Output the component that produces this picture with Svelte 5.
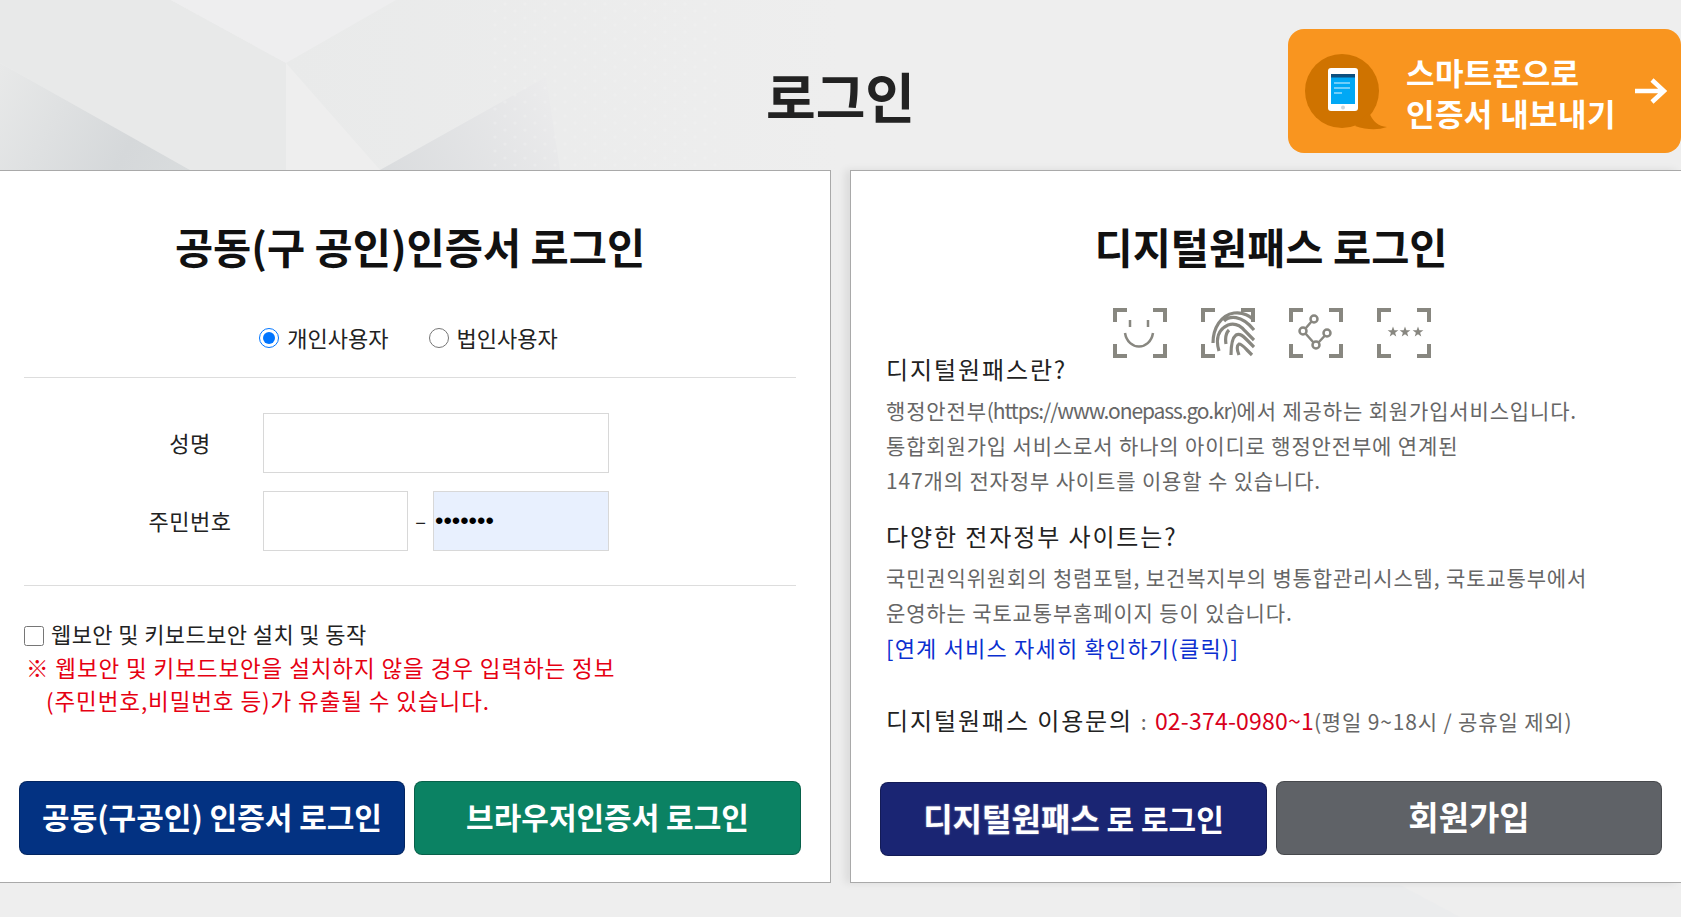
<script>
  const bullets = '•••••••';
  const stars = [16, 28, 41];
</script>

<div class="page">
  <svg class="bg" width="1681" height="917" viewBox="0 0 1681 917" aria-hidden="true">
    <defs>
      <linearGradient id="shadeA" gradientUnits="userSpaceOnUse" x1="0" y1="63" x2="190" y2="170">
        <stop offset="0" stop-color="#e8e9e9" />
        <stop offset="0.7" stop-color="#d5d8da" />
        <stop offset="1" stop-color="#d9dcdd" />
      </linearGradient>
      <linearGradient id="shadeB" gradientUnits="userSpaceOnUse" x1="380" y1="170" x2="546" y2="77">
        <stop offset="0" stop-color="#dadcde" />
        <stop offset="1" stop-color="#ebebec" />
      </linearGradient>
      <linearGradient id="fade" gradientUnits="userSpaceOnUse" x1="286" y1="0" x2="840" y2="0">
        <stop offset="0" stop-color="#e9eaea" />
        <stop offset="1" stop-color="#eeeeee" />
      </linearGradient>
      <pattern id="dots" width="20" height="14" patternUnits="userSpaceOnUse">
        <circle cx="5" cy="4" r="1.6" fill="#f4f4f4" />
        <circle cx="15" cy="11" r="1.6" fill="#f4f4f4" />
      </pattern>
    </defs>
    <polygon points="0,0 171,0 286,63 286,170 190,170 0,63" fill="#e8e9e9" />
    <polygon points="171,0 396,0 286,63" fill="#eeeeef" />
    <polygon points="286,63 396,0 840,0 840,170 380,170" fill="url(#fade)" />
    <polygon points="0,63 190,170 0,170" fill="url(#shadeA)" />
    <polygon points="546,77 380,170 560,170" fill="url(#shadeB)" />
    <polygon points="490,0 720,0 720,170 490,170" fill="url(#dots)" opacity="0.3" />
    <polygon points="1140,885 1400,885 1460,917 1140,917" fill="#ebeced" />
  </svg>

  <header class="top">
    <h1>로그인</h1>
    <a class="export" href="#export">
      <svg class="export-icon" width="84" height="78" viewBox="0 0 84 78" aria-hidden="true">
        <circle cx="37" cy="37" r="37" fill="#cf7300" />
        <path d="M64 58Q69 72 82 73Q68 78 50 72Z" fill="#cf7300" />
        <rect x="23" y="14" width="30" height="43" rx="3" fill="#fff" />
        <rect x="26" y="20" width="24" height="30" fill="#00a8f5" />
        <rect x="26" y="20" width="24" height="3.5" fill="#0d4f7e" />
        <path d="M29 29H45M29 34H45M29 39H37" stroke="#dff4ff" stroke-width="1.2" fill="none" />
        <circle cx="38" cy="53.5" r="2" fill="#cfd6da" />
      </svg>
      <span class="export-text">스마트폰으로<br />인증서 내보내기</span>
      <svg class="export-arrow" width="34" height="28" viewBox="0 0 34 28" aria-hidden="true">
        <path d="M2 14H30M19 3L31 14L19 25" stroke="#fff" stroke-width="4.5" fill="none" />
      </svg>
    </a>
  </header>

  <main class="panels">
    <section class="panel left">
      <h2>공동(구 공인)인증서 로그인</h2>
      <div class="radios">
        <label><input type="radio" name="kind" checked /> 개인사용자</label>
        <label><input type="radio" name="kind" /> 법인사용자</label>
      </div>
      <div class="form">
        <div class="row">
          <span class="row-label">성명</span>
          <input class="field wide" type="text" />
        </div>
        <div class="row">
          <span class="row-label">주민번호</span>
          <input class="field short" type="text" />
          <span class="dash">–</span>
          <input class="field filled" type="text" value={bullets} />
        </div>
      </div>
      <label class="check"><input type="checkbox" /> 웹보안 및 키보드보안 설치 및 동작</label>
      <p class="warn">※ 웹보안 및 키보드보안을 설치하지 않을 경우 입력하는 정보<br /><span class="warn-indent">(주민번호,비밀번호 등)가 유출될 수 있습니다.</span></p>
      <div class="actions">
        <button class="btn navy">공동(구공인) 인증서 로그인</button>
        <button class="btn green">브라우저인증서 로그인</button>
      </div>
    </section>

    <section class="panel right">
      <h2>디지털원패스 로그인</h2>
      <div class="methods">
        <svg width="54" height="50" viewBox="0 0 54 50" aria-hidden="true">
          <path class="corners" d="M2 14V2H14M40 2H52V14M2 36V48H14M40 48H52V36" />
          <path class="thin" d="M17 12V19M35 12V19M12 25C15 43 37 43 40 25" />
        </svg>
        <svg width="54" height="50" viewBox="0 0 54 50" aria-hidden="true">
          <path class="corners" d="M2 14V2H14M40 2H52V14M2 36V48H14" />
          <path class="print" d="M12 35C12 20 20 7 33 5C41 4 48 7 53 12M23 13C28 8 40 6 53 22M18 43C14 30 18 21 27 17C33 15 39 17 44 23L53 32M25 36C24 30 25 25 28 22M30 47C30 38 31 30 35 27C39 25 42 28 46 32L53 39M38 47C36 42 35 38 38 36C41 36 44 40 47 43L51 47" />
        </svg>
        <svg width="54" height="50" viewBox="0 0 54 50" aria-hidden="true">
          <path class="corners" d="M2 14V2H14M40 2H52V14M2 36V48H14M40 48H52V36" />
          <circle class="thin" cx="25" cy="11" r="3.5" />
          <circle class="thin" cx="14" cy="23" r="3.5" />
          <circle class="thin" cx="38" cy="25" r="3.5" />
          <circle class="thin" cx="27" cy="37" r="3.5" />
          <path class="thin" d="M22.5 13.5L16.5 20.5M16.5 25.5L24.5 34.5M29.5 34.5L35.5 28" />
        </svg>
        <svg width="54" height="50" viewBox="0 0 54 50" aria-hidden="true">
          <path class="corners" d="M2 14V2H14M40 2H52V14M2 36V48H14M40 48H52V36" />
          {#each stars as x}
            <path class="dot" transform="translate({x} 24) scale(1.25)" d="M0-4.5L1.1-1.4L4.3-1.4L1.7.5L2.6 3.6L0 1.8L-2.6 3.6L-1.7.5L-4.3-1.4L-1.1-1.4Z" />
          {/each}
        </svg>
      </div>

      <div class="info">
        <h3>디지털원패스란?</h3>
        <p>행정안전부<span class="url">(https://www.onepass.go.kr)</span>에서 제공하는 회원가입서비스입니다.<br />통합회원가입 서비스로서 하나의 아이디로 행정안전부에 연계된<br />147개의 전자정부 사이트를 이용할 수 있습니다.</p>
        <h3 class="second">다양한 전자정부 사이트는?</h3>
        <p>국민권익위원회의 청렴포털, 보건복지부의 병통합관리시스템, 국토교통부에서<br />운영하는 국토교통부홈페이지 등이 있습니다.<br /><a href="#services">[연계 서비스 자세히 확인하기(클릭)]</a></p>
        <p class="contact"><strong>디지털원패스 이용문의</strong> <span class="colon">:</span> <em>02-374-0980~1</em>(평일 9~18시 / 공휴일 제외)</p>
      </div>

      <div class="actions">
        <button class="btn indigo"><span class="soft">디지털원패스</span> 로 로그인</button>
        <button class="btn gray">회원가입</button>
      </div>
    </section>
  </main>
</div>

<style>
  :global(body) {
    margin: 0;
    background: #eeeeee;
    font-family: "Noto Sans CJK KR", "Liberation Sans", sans-serif;
  }

  .page {
    position: relative;
    width: 1681px;
    height: 917px;
    overflow: hidden;
    background: #eeeeee;
  }

  .bg {
    position: absolute;
    left: 0;
    top: 0;
  }

  .top {
    position: relative;
    height: 170px;
    display: flex;
    justify-content: center;
  }

  h1 {
    margin: 61px 0 0;
    font-size: 54px;
    line-height: 70px;
    font-weight: 700;
    color: #222;
  }

  .export {
    position: absolute;
    left: 1288px;
    top: 29px;
    width: 393px;
    height: 124px;
    box-sizing: border-box;
    padding-left: 17px;
    display: flex;
    align-items: center;
    background: #f9951f;
    border-radius: 16px;
    color: #fff;
    text-decoration: none;
  }

  .export-icon {
    flex: none;
    margin-top: 3px;
  }

  .export-text {
    margin-left: 17px;
    margin-top: 2px;
    font-size: 31px;
    line-height: 41px;
    font-weight: 700;
    letter-spacing: 0.4px;
  }

  .export-arrow {
    margin-left: auto;
    margin-right: 14px;
  }

  .panels {
    position: relative;
    display: flex;
    gap: 19px;
  }

  .panel {
    position: relative;
    box-sizing: border-box;
    height: 713px;
    background: #fff;
    border: 1px solid #a9a9a9;
  }

  .left {
    width: 831px;
    border-left: 0;
    padding: 0 0 0 24px;
  }

  .right {
    width: 831px;
    border-right: 0;
    padding: 0 0 0 35px;
    box-shadow: -5px 0 8px rgba(0, 0, 0, 0.08);
  }

  h2 {
    margin: 47px 0 0;
    font-size: 41.5px;
    line-height: 56px;
    font-weight: 700;
    color: #111;
    text-align: center;
  }

  .left h2 {
    margin-left: -24px;
    margin-right: 10px;
  }

  .right h2 {
    margin-left: -35px;
    margin-right: -10px;
  }

  .radios {
    width: 772px;
    margin-top: 48px;
    padding: 0 3px 25px 0;
    display: flex;
    justify-content: center;
    gap: 40px;
    border-bottom: 1px solid #ddd;
    font-size: 22px;
    line-height: 30px;
    color: #222;
    box-sizing: border-box;
  }

  .radios label {
    display: flex;
    align-items: center;
    gap: 8px;
  }

  .radios input {
    width: 20px;
    height: 20px;
    margin: 2px 0 0;
    accent-color: #0075ff;
  }

  .form {
    width: 772px;
    box-sizing: border-box;
    padding: 35px 0 34px;
    border-bottom: 1px solid #ddd;
    display: flex;
    flex-direction: column;
    gap: 18px;
  }

  .row {
    display: flex;
    align-items: center;
    height: 60px;
  }

  .row-label {
    width: 239px;
    padding: 0 0 3px 93px;
    box-sizing: border-box;
    text-align: center;
    font-size: 22px;
    letter-spacing: 0.5px;
    color: #222;
    flex: none;
  }

  .field {
    box-sizing: border-box;
    height: 60px;
    border: 1px solid #d8d8d8;
    background: #fff;
    padding: 0 1px;
    outline: none;
    flex: none;
  }

  .wide {
    width: 346px;
  }

  .short {
    width: 145px;
  }

  .dash {
    width: 25px;
    text-align: center;
    color: #222;
    font-size: 20px;
    line-height: 60px;
  }

  .filled {
    width: 176px;
    background: #e8f0fe;
    font-family: "Liberation Sans", sans-serif;
    font-size: 24px;
    color: #000;
  }

  .check {
    display: flex;
    align-items: center;
    gap: 7px;
    margin-top: 32px;
    font-size: 22px;
    letter-spacing: 0.4px;
    line-height: 30px;
    color: #222;
  }

  .check input {
    width: 20px;
    height: 20px;
    margin: 5px 0 0;
  }

  .warn {
    margin: 3px 0 0 2px;
    font-size: 22.5px;
    letter-spacing: 0.9px;
    line-height: 33px;
    color: #e60012;
  }

  .warn-indent {
    margin-left: 20px;
  }

  .actions {
    position: absolute;
    left: 19px;
    bottom: 27px;
    display: flex;
    gap: 9px;
  }

  .right .actions {
    left: 29px;
    gap: 9px;
    bottom: 26px;
  }

  .btn {
    width: 386px;
    height: 74px;
    border: 1px solid rgba(0, 0, 0, 0.25);
    border-radius: 8px;
    color: #fff;
    font-family: inherit;
    font-size: 30px;
    font-weight: 700;
    padding: 0 0 4px;
  }

  .navy { background: #033282; }
  .green { background: #0b8263; width: 387px; }
  .indigo { background: #1a2573; margin-top: 1px; width: 387px; }
  .gray { background: #5f6267; font-size: 33px; }

  .soft {
    font-size: 32px;
    font-weight: 700;
    text-shadow: 0 0 2px rgba(255, 255, 255, 0.5);
  }

  .methods {
    display: flex;
    gap: 34px;
    margin: 34px 0 0 227px;
  }

  .corners {
    fill: none;
    stroke: #888780;
    stroke-width: 4;
  }

  .thin {
    fill: none;
    stroke: #888780;
    stroke-width: 2.5;
  }

  .print {
    fill: none;
    stroke: #888780;
    stroke-width: 3.2;
  }

  .dot {
    fill: #888780;
  }

  .info {
    margin-top: -6px;
    color: #666;
    font-size: 21px;
    letter-spacing: 0.85px;
  }

  h3 {
    margin: 0;
    font-size: 24px;
    letter-spacing: 1.9px;
    line-height: 34px;
    font-weight: 400;
    color: #222;
  }

  .second {
    margin-top: 21px;
  }

  .info p {
    margin: 7px 0 0;
    line-height: 35px;
  }

  .url {
    letter-spacing: -1.1px;
  }

  .info a {
    color: #0b2fd0;
    text-decoration: none;
    font-size: 22px;
    letter-spacing: 1.2px;
  }

  .info .contact {
    margin-top: 36px;
    font-size: 21px;
  }

  .contact strong {
    font-weight: 400;
    font-size: 24px;
    letter-spacing: 1.9px;
    color: #222;
  }

  .colon {
    margin: 0 2px;
  }

  .contact em {
    font-style: normal;
    font-size: 23px;
    letter-spacing: 0.2px;
    color: #d9001b;
  }
</style>
